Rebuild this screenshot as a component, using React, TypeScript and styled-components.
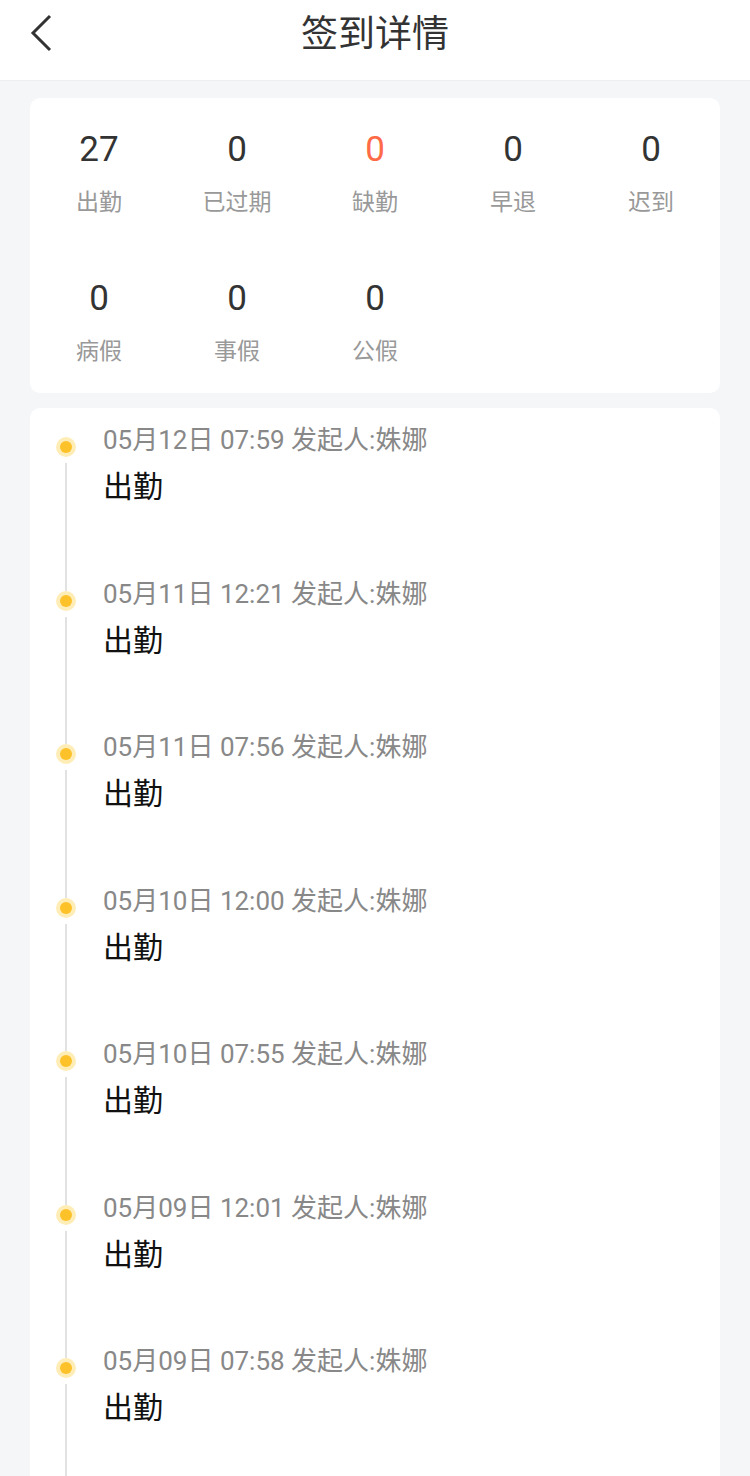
import { FC } from "react";
import styled, { createGlobalStyle } from "styled-components";

const GlobalStyle = createGlobalStyle`
  html, body {
    margin: 0;
    padding: 0;
    background: #f5f6f8;
    font-family: Roboto, "Noto Sans CJK SC", sans-serif;
  }
  * { box-sizing: border-box; }
`;

const Page = styled.div`
  width: 750px;
  min-height: 1476px;
  background: #f5f6f8;
  overflow: hidden;
`;

const Header = styled.header`
  height: 81px;
  background: #fff;
  border-bottom: 1px solid #efefef;
  display: grid;
  grid-template-columns: 80px 1fr 80px;
  align-items: center;
`;

const BackButton = styled.button`
  border: 0;
  background: none;
  padding: 0 0 14px 28px;
  height: 100%;
  display: flex;
  align-items: center;
  cursor: pointer;
`;

const Title = styled.h1`
  margin: 0 0 18px;
  text-align: center;
  font-size: 37px;
  font-weight: 400;
  color: #333;
`;

const Body = styled.main`
  padding: 17px 30px 0;
  display: flex;
  flex-direction: column;
  gap: 15px;
`;

const Card = styled.section`
  background: #fff;
  border-radius: 10px;
`;

const StatsGrid = styled.div`
  display: grid;
  grid-template-columns: repeat(5, 1fr);
  row-gap: 58px;
  padding: 30px 0 25px;
`;

const Stat = styled.div`
  display: flex;
  flex-direction: column;
  align-items: center;
  gap: 15px;
`;

const StatNumber = styled.div<{ $alert?: boolean }>`
  font-size: 35px;
  line-height: 44px;
  color: ${(p) => (p.$alert ? "#ff6b47" : "#333")};
`;

const StatLabel = styled.div`
  font-size: 23px;
  line-height: 32px;
  color: #999;
`;

const Timeline = styled.ol`
  list-style: none;
  margin: 0;
  padding: 16px 0 0;
`;

const Entry = styled.li`
  display: grid;
  grid-template-columns: 73px 1fr;
  height: 153.5px;
`;

const Rail = styled.div`
  display: flex;
  flex-direction: column;
  align-items: center;
  width: 72px;
`;

const Dot = styled.span`
  margin-top: 13px;
  width: 20px;
  height: 20px;
  border-radius: 50%;
  background: #ffedb8;
  display: flex;
  align-items: center;
  justify-content: center;
  flex-shrink: 0;
  &::after {
    content: "";
    width: 12px;
    height: 12px;
    border-radius: 50%;
    background: #fdc22a;
  }
`;

const Line = styled.span`
  flex: 1;
  width: 2px;
  background: #e2e2e2;
  margin: 6px 0 -13px;
`;

const EntryBody = styled.div`
  display: flex;
  flex-direction: column;
  gap: 11px;
`;

const Meta = styled.div`
  font-size: 26px;
  line-height: 32px;
  color: #888;
  white-space: nowrap;
`;

const EntryTitle = styled.div`
  font-size: 30px;
  line-height: 40px;
  color: #111;
`;

const stats = [
  { n: 27, label: "出勤" },
  { n: 0, label: "已过期" },
  { n: 0, label: "缺勤", alert: true },
  { n: 0, label: "早退" },
  { n: 0, label: "迟到" },
  { n: 0, label: "病假" },
  { n: 0, label: "事假" },
  { n: 0, label: "公假" },
];

const records = [
  "05月12日 07:59",
  "05月11日 12:21",
  "05月11日 07:56",
  "05月10日 12:00",
  "05月10日 07:55",
  "05月09日 12:01",
  "05月09日 07:58",
];

const App: FC = () => {
  return (
    <Page>
      <GlobalStyle />
      <Header>
        <BackButton aria-label="返回">
          <svg width="26" height="38" viewBox="0 0 26 38" fill="none">
            <polyline points="22,2 5,19 22,36" stroke="#333" strokeWidth="3" strokeLinejoin="miter" />
          </svg>
        </BackButton>
        <Title>签到详情</Title>
        <span />
      </Header>
      <Body>
        <Card>
          <StatsGrid>
            {stats.map((s, i) => (
              <Stat key={i}>
                <StatNumber $alert={s.alert}>{s.n}</StatNumber>
                <StatLabel>{s.label}</StatLabel>
              </Stat>
            ))}
          </StatsGrid>
        </Card>
        <Card>
          <Timeline>
            {records.map((r, i) => (
              <Entry key={i}>
                <Rail>
                  <Dot />
                  <Line />
                </Rail>
                <EntryBody>
                  <Meta>{r} 发起人:姝娜</Meta>
                  <EntryTitle>出勤</EntryTitle>
                </EntryBody>
              </Entry>
            ))}
          </Timeline>
        </Card>
      </Body>
    </Page>
  );
};

export default App;
